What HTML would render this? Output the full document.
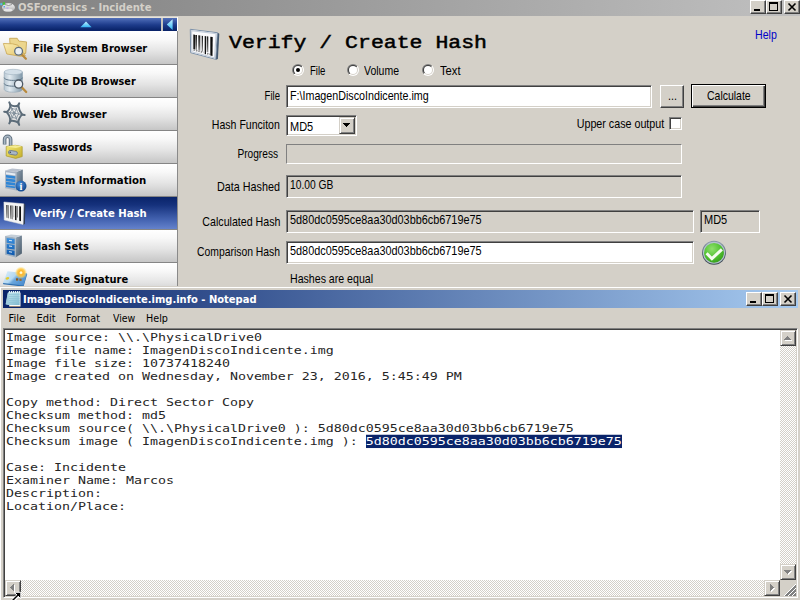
<!DOCTYPE html>
<html><head><meta charset="utf-8">
<style>
*{box-sizing:border-box;margin:0;padding:0}
html,body{width:800px;height:600px;overflow:hidden;background:#d4d0c8;font-family:"Liberation Sans",sans-serif;font-size:13px;color:#000}
.abs,.a{position:absolute}
/* scaled MS Sans Serif-like text */
.s{position:absolute;white-space:nowrap;font-size:13px;line-height:14px;transform-origin:0 0;transform:scaleX(var(--k,.82))}
.s.r{transform-origin:100% 0}
#title1{left:0;top:0;width:800px;height:16px;background:linear-gradient(90deg,#808080,#c0c0c0)}
.tt{position:absolute;font-family:"DejaVu Sans Condensed","DejaVu Sans",sans-serif;font-weight:bold;font-size:11px;line-height:13px;white-space:nowrap}
.wbtn{position:absolute;width:16px;height:14px;background:#d4d0c8;border:1px solid;border-color:#fff #404040 #404040 #fff;box-shadow:inset -1px -1px 0 #808080}
.wbtn svg{position:absolute;left:0;top:0}
#side{left:0;top:17px;width:178px;height:269px;background:#fff;overflow:hidden}
#strip{position:absolute;left:0;top:0;width:177px;height:14px;background:linear-gradient(180deg,#e6e3da 0,#e6e3da 1px,#5470b8 1px,#3a59a6 4px,#1d3b8a 8px,#0a246a 13px,#0a246a 100%)}
.item{position:absolute;left:0;width:178px;height:33px;border-bottom:1px solid #858585;background:linear-gradient(180deg,#ffffff 0%,#f8f8f8 25%,#e4e4e4 60%,#c6c6c6 100%)}
.item .tt{left:33px;top:10px;color:#000}
.item.sel{background:linear-gradient(180deg,#0a246a 0%,#15317c 25%,#4362b0 70%,#6482cc 100%)}
.item.sel .tt{color:#fff}
.item svg{position:absolute;left:0;top:0}
.field{position:absolute;border:1px solid;border-color:#808080 #fff #fff #808080;box-shadow:inset 1px 1px 0 #404040,inset -1px -1px 0 #d4d0c8;background:#fff}
.field.ro{background:#d4d0c8}
.btn{position:absolute;background:#d4d0c8;border:1px solid;border-color:#fff #404040 #404040 #fff;box-shadow:inset -1px -1px 0 #808080}
.radio{position:absolute;width:12px;height:12px}
#title2{left:3px;top:290px;width:795px;height:18px;background:linear-gradient(90deg,#0a246a,#a6caf0)}
#edit{left:3px;top:328px;width:795px;height:270px;background:#fff;border:1px solid;border-color:#808080 #fff #fff #808080;box-shadow:inset 1px 1px 0 #404040,inset -1px -1px 0 #d4d0c8}
pre{position:absolute;left:2px;top:2px;font-family:"DejaVu Sans Mono","Liberation Mono",monospace;font-size:13.29px;line-height:15.663px;color:#262626;transform-origin:0 0;transform:scaleY(.83)}
.hl{background:#0a246a;color:#fff;padding-bottom:1.2px}
.sb{position:absolute;background-color:#fff;background-image:conic-gradient(#d4d0c8 25%,#fff 0 50%,#d4d0c8 0 75%,#fff 0);background-size:2px 2px}
.sbtn{position:absolute;width:16px;height:16px;background:#d4d0c8;border:1px solid;border-color:#d4d0c8 #404040 #404040 #d4d0c8;box-shadow:inset 1px 1px 0 #fff,inset -1px -1px 0 #808080}
.sbtn svg{position:absolute;left:-1px;top:-1px}
</style></head><body>
<!-- ============ OSForensics window ============ -->
<div id="title1" class="abs"><svg class="a" style="left:0;top:0" width="17" height="16"><defs><linearGradient id="os1" x1="0" y1="0" x2="0" y2="1"><stop offset="0" stop-color="#fafafa"/><stop offset="1" stop-color="#a8a8a8"/></linearGradient></defs>
<ellipse cx="8.500" cy="7.500" rx="6.500" ry="4.300" fill="url(#os1)"/><ellipse cx="8" cy="10" rx="4.500" ry="1.600" fill="#e6e6e6"/><path d="M5 4.500q3.500 2 7 0" stroke="#8a8a8a" stroke-width=".9" fill="none"/>
<rect x="2.800" y="2.200" width="2.200" height="2.500" fill="#45c23a"/><rect x="0.300" y="3.200" width="2" height="2" fill="#52c6ee"/><rect x="3.500" y="6" width="1.500" height="1.500" fill="#5aa0ee"/><rect x="6.500" y="7.500" width="2" height="1.200" fill="#b59cf0"/></svg><span class="tt" style="left:18.200px;top:1px;color:#d4d0c8;transform-origin:0 0;transform:scaleX(1.014)">OSForensics - Incidente</span></div>
<div class="wbtn" style="left:750px;top:0"><svg width="16" height="14"><rect x="3" y="8" width="6" height="2" fill="#000"/></svg></div>
<div class="wbtn" style="left:766px;top:0"><svg width="16" height="14"><rect x="2.5" y="1.5" width="8" height="8" fill="none" stroke="#000"/><rect x="2" y="1" width="9" height="2" fill="#000"/></svg></div>
<div class="wbtn" style="left:784px;top:0"><svg width="16" height="14"><path d="M3.5 2.5l7 7M10.5 2.5l-7 7" stroke="#000" stroke-width="1.6" fill="none"/></svg></div>

<div id="side" class="abs">
 <div id="strip"></div>
 <div class="a" style="left:161px;top:1px;width:2px;height:13px;background:#c9c5bd"></div>
 <svg class="a" style="left:0;top:0" width="178" height="14"><defs><linearGradient id="ar1" x1="0" y1="0" x2="0" y2="1"><stop offset="0" stop-color="#c8f4ff"/><stop offset="1" stop-color="#2fb4f4"/></linearGradient></defs><path d="M86 4.500l5.600 5.700h-11.200z" fill="url(#ar1)"/><path d="M166.800 7.500l5.800-5.300v10.800z" fill="url(#ar1)"/></svg>
 <div class="item" style="top:15px"><svg width="32" height="33"><defs><linearGradient id="fo1" x1="0" y1="0" x2="1" y2="1"><stop offset="0" stop-color="#fbeeb4"/><stop offset="1" stop-color="#e2c268"/></linearGradient></defs>
<path d="M9.6 6.3h7.6l1.6 2.8 7.8.8-.9 11.5-15 .8z" fill="#ecd68e" stroke="#c4a24e" stroke-width=".8"/>
<path d="M3.4 11.5l9 .3 5.4 1.3 7.6 10.6-5 .6-13.6-2.3z" fill="url(#fo1)" stroke="#c9a652" stroke-width=".8"/>
<path d="M21.3 22l4.6 4.8" stroke="#b98a3c" stroke-width="2.2" stroke-linecap="round"/>
<circle cx="18.6" cy="19.3" r="3.9" fill="#e9eff5" stroke="#5f6e7c" stroke-width="1.3"/></svg><span class="tt">File System Browser</span></div>
 <div class="item" style="top:48px"><svg width="32" height="33"><defs><linearGradient id="db1" x1="0" y1="0" x2="1" y2="0"><stop offset="0" stop-color="#b9c8d3"/><stop offset=".3" stop-color="#e2ebf1"/><stop offset="1" stop-color="#7f97a8"/></linearGradient></defs>
<path d="M4.2 7v17.2c0 1.8 4.1 3 9.1 3s9.2-1.200 9.200-3V7z" fill="url(#db1)" stroke="#8fa3b2" stroke-width=".6"/>
<path d="M4.2 12.600c0 1.700 4.100 2.800 9.100 2.800s9.200-1.100 9.200-2.800M4.200 18.400c0 1.700 4.100 2.800 9.100 2.800s9.200-1.100 9.200-2.800" fill="none" stroke="#62788a" stroke-width="1"/>
<ellipse cx="13.300" cy="7" rx="9.100" ry="2.700" fill="#d3dfe8" stroke="#9db0be" stroke-width=".6"/>
<path d="M21.500 22l4.700 5" stroke="#b98a3c" stroke-width="2.300" stroke-linecap="round"/>
<circle cx="18.600" cy="19.100" r="4.100" fill="#e9eff5" stroke="#4e5a66" stroke-width="1.300"/></svg><span class="tt" style="transform-origin:0 0;transform:scaleX(.976)">SQLite DB Browser</span></div>
 <div class="item" style="top:81px"><svg width="32" height="33"><g fill="none" stroke="#5c6c79" stroke-linecap="round">
<path d="M9.300 4.400L19.200 26.900M19.200 5.300L9.300 25.400M4.200 13.700L24.600 17" stroke="#8a97a2" stroke-width="1"/>
<path d="M9.300 4.400l1.200 2.700M19.200 5.300l-1.200 2.400M24.600 17l-2.600-.4M19.200 26.900l-1.200-2.800M9.300 25.400l1.200-2.500M4.200 13.700l2.600.4" stroke-width="2"/>
<path d="M10.300 6.800Q14.500 9.400 18.400 7.400Q18.800 12.500 22.200 16.600Q18.600 19.800 18.400 24.600Q14 22.200 10.100 23Q10.500 18.200 6.600 14.100Q10.500 11.400 10.300 6.800z" stroke-width="1.900"/>
<path d="M12 10.500Q14.300 11.700 16.600 10.800Q17 13.600 19 15.900Q16.900 17.700 16.500 20.500Q14.100 19.400 11.900 19.700Q12 17 9.800 14.600Q12 13 12 10.500z" stroke="#7c8a96" stroke-width=".9"/>
<circle cx="14.100" cy="15.200" r="1.300" stroke="#7c8a96" stroke-width=".9"/></g></svg><span class="tt">Web Browser</span></div>
 <div class="item" style="top:114px"><svg width="32" height="33"><defs><linearGradient id="lk1" x1="0" y1="0" x2="1" y2="1"><stop offset="0" stop-color="#f3e873"/><stop offset="1" stop-color="#c4ae2c"/></linearGradient></defs>
<path d="M4.600 13.500V8.300a3 3 0 0 1 6 0V15" fill="none" stroke="#5d6d7c" stroke-width="3.600"/>
<path d="M4.600 13.500V8.300a3 3 0 0 1 6 0V15" fill="none" stroke="#a7b6c3" stroke-width="1.700"/>
<path d="M6.200 15.500l9-1.200 7 1.300v10l-6.500 1.800-9.500-2.400z" fill="url(#lk1)" stroke="#a8962a" stroke-width=".7"/>
<path d="M6.200 15.500l9-1.200 7 1.300-6.500 1.300z" fill="#f5ec94"/>
<rect x="8.400" y="19.900" width="9" height="3.800" rx="1.900" transform="rotate(10 13 22)" fill="#a9b7c6" stroke="#667689" stroke-width=".8"/><circle cx="10.300" cy="21.300" r=".8" fill="#3c4650"/></svg><span class="tt">Passwords</span></div>
 <div class="item" style="top:147px"><svg width="32" height="33"><defs><radialGradient id="sv1" cx=".4" cy=".35" r=".7"><stop offset="0" stop-color="#4a90dc"/><stop offset="1" stop-color="#0d4388"/></radialGradient></defs>
<path d="M16.200 8l6.600-2.400v17.600l-6.600 3.400z" fill="url(#cb2)"/>
<path d="M5.100 6.500l7-2 10.700 1.100-6.600 2.400z" fill="#b8c0cd"/>
<path d="M5.100 6.500l11.100 1.500v18.600L5.100 24.200z" fill="#a9b4c4"/>
<path d="M6 8.200l9.300 1.200v2L6 10.300z" fill="#e8edf3"/>
<path d="M6 11l9.300 1.200v2.600L6 13.600zM6 14.400l9.300 1.200v2.600L6 17zM6 17.800l9.300 1.200v2.600L6 20.400zM6 21.200l9.300 1.200v1.800L6 22.900z" fill="#2f86d6"/>
<circle cx="21" cy="22.100" r="5.500" fill="url(#sv1)"/>
<text x="21" y="26" text-anchor="middle" font-family="Liberation Serif,serif" font-weight="bold" font-size="10.500" fill="#fff">i</text></svg><span class="tt" style="transform-origin:0 0;transform:scaleX(1.026)">System Information</span></div>
 <div class="item sel" style="top:180px"><svg width="32" height="33"><path d="M23.700 6.600l1.700 1-.5 19.500-1.800.600z" fill="#2f3b50"/>
<path d="M3.900 5l19.800 1.800-.6 20.700L4.200 23z" fill="#f4f4f4" stroke="#dcdcdc" stroke-width=".5"/>
<g fill="#555"><path d="M6.300 8l1.200.1v13l-1.200-.3z" fill="url(#bb1)"/><path d="M7.800 8.100l1.200.1v13.200l-1.200-.3z" fill="#8c8c8c"/><path d="M10.200 8.400l1.300.1v13.600l-1.300-.3z" fill="url(#bb1)"/><path d="M11.700 8.500l1.200.1v13.800l-1.200-.3z" fill="#8c8c8c"/><path d="M13.400 8.700h.8v11.500h-.8z" fill="#aaa"/><path d="M15 8.800l1.500.1v14.400l-1.500-.3z" fill="#1c1c1c"/><path d="M16.900 9l1.100.1v11.500h-1.100z" fill="#888"/><path d="M19.200 9.200l1.800.2v14.800l-1.800-.4z" fill="#111"/></g></svg><span class="tt" style="transform-origin:0 0;transform:scaleX(1.018)">Verify / Create Hash</span></div>
 <div class="item" style="top:213px"><svg width="32" height="33"><defs><linearGradient id="cb1" x1="0" y1="0" x2="0" y2="1"><stop offset="0" stop-color="#3a90e0"/><stop offset="1" stop-color="#0f58ac"/></linearGradient><linearGradient id="cb2" x1="0" y1="0" x2="1" y2="1"><stop offset="0" stop-color="#93a4b4"/><stop offset="1" stop-color="#465868"/></linearGradient></defs>
<path d="M15.600 7.500l6.300-2v18l-6.300 4z" fill="url(#cb2)"/>
<path d="M5.100 6l6-1.600 10.800 1.100-6.300 2z" fill="#c4ced8"/>
<path d="M5.100 6l10.500 1.500v20L5.100 24.800z" fill="#9fb0c0"/>
<path d="M6.700 8l7.900 1.100v4.800L6.700 12.700zM6.700 13.900l7.900 1.200v4.500l-7.900-1.200zM6.700 19.500l7.900 1.200v4.700l-7.900-1.600z" fill="url(#cb1)"/>
<path d="M9 10.400l3 .4M9 16l3 .4M9 21.700l3 .5" stroke="#dbe9f6" stroke-width="1"/></svg><span class="tt">Hash Sets</span></div>
 <div class="item" style="top:246px"><svg width="32" height="33"><defs><linearGradient id="sg1" x1="0" y1="0" x2="1" y2=".6"><stop offset="0" stop-color="#dceef9"/><stop offset=".5" stop-color="#b4d8f2"/><stop offset=".62" stop-color="#6aa6dc"/><stop offset="1" stop-color="#4d8fd0"/></linearGradient><radialGradient id="sg2"><stop offset="0" stop-color="#fff"/><stop offset=".14" stop-color="#fff6c0"/><stop offset=".32" stop-color="#ffb52a"/><stop offset=".62" stop-color="#ffc640" stop-opacity=".85"/><stop offset="1" stop-color="#ffe470" stop-opacity="0"/></radialGradient></defs>
<path d="M3 20l.3 1.200 20.200 2.500 3.600-12.300-.1-.9z" fill="#2e6eae"/>
<path d="M7.500 8.200L27 10.500l-3.500 12L3 20z" fill="url(#sg1)"/>
<ellipse cx="7.400" cy="15.400" rx="1.900" ry="1.300" transform="rotate(-20 7.400 15.400)" fill="#e3cb2c"/>
<rect x="16" y="15.300" width="2.200" height="2.300" fill="#8a5a20"/><rect x="19.400" y="15.600" width="2.200" height="2.300" fill="#9a6a30"/>
<circle cx="21" cy="9.700" r="6.200" fill="url(#sg2)"/></svg><span class="tt">Create Signature</span></div>
 <div class="a" style="left:177px;top:14px;width:1px;height:256px;background:#8a8a8a"></div>
</div>

<div class="abs" style="left:229px;top:32px;font-family:'Liberation Mono',monospace;font-weight:normal;-webkit-text-stroke:.5px #000;font-size:18.5px;line-height:24px;white-space:nowrap;transform-origin:0 0;transform:scaleX(1.162)">Verify / Create Hash</div>
<span class="s" style="left:754.6px;top:28px;color:#0000c8;--k:.815">Help</span>

<svg class="a" style="left:292px;top:64px" width="12" height="12"><defs><linearGradient id="rg0a" x1="0" y1="0" x2="1" y2="1"><stop offset=".5" stop-color="#808080"/><stop offset=".5" stop-color="#fff"/></linearGradient><linearGradient id="rg0b" x1="0" y1="0" x2="1" y2="1"><stop offset=".5" stop-color="#404040"/><stop offset=".5" stop-color="#d4d0c8"/></linearGradient></defs><circle cx="6" cy="6" r="6" fill="url(#rg0a)"/><circle cx="6" cy="6" r="5" fill="url(#rg0b)"/><circle cx="6" cy="6" r="4" fill="#fff"/><circle cx="6" cy="6" r="2" fill="#000"/></svg>
<svg class="a" style="left:347px;top:64px" width="12" height="12"><defs><linearGradient id="rg1a" x1="0" y1="0" x2="1" y2="1"><stop offset=".5" stop-color="#808080"/><stop offset=".5" stop-color="#fff"/></linearGradient><linearGradient id="rg1b" x1="0" y1="0" x2="1" y2="1"><stop offset=".5" stop-color="#404040"/><stop offset=".5" stop-color="#d4d0c8"/></linearGradient></defs><circle cx="6" cy="6" r="6" fill="url(#rg1a)"/><circle cx="6" cy="6" r="5" fill="url(#rg1b)"/><circle cx="6" cy="6" r="4" fill="#fff"/></svg>
<svg class="a" style="left:422px;top:64px" width="12" height="12"><defs><linearGradient id="rg2a" x1="0" y1="0" x2="1" y2="1"><stop offset=".5" stop-color="#808080"/><stop offset=".5" stop-color="#fff"/></linearGradient><linearGradient id="rg2b" x1="0" y1="0" x2="1" y2="1"><stop offset=".5" stop-color="#404040"/><stop offset=".5" stop-color="#d4d0c8"/></linearGradient></defs><circle cx="6" cy="6" r="6" fill="url(#rg2a)"/><circle cx="6" cy="6" r="5" fill="url(#rg2b)"/><circle cx="6" cy="6" r="4" fill="#fff"/></svg>
<svg class="a" style="left:186px;top:26px" width="36" height="36"><defs><linearGradient id="bb1" x1="0" y1="0" x2="0" y2="1"><stop offset="0" stop-color="#1a1a1a"/><stop offset=".65" stop-color="#5a5a5a"/><stop offset="1" stop-color="#9a9a9a"/></linearGradient><linearGradient id="bb2" x1="0" y1="0" x2="0" y2="1"><stop offset="0" stop-color="#111"/><stop offset="1" stop-color="#222"/></linearGradient></defs>
<path d="M31.300 6.500l2 1.200-1.400 25.300-2.200.7z" fill="#44586f"/>
<path d="M4.300 3.300l27 3.400-1.600 26.600-25-6.600z" fill="#fbfbfd" stroke="#7b90a8" stroke-width="1"/>
<path d="M5.500 4.600l24.600 3.100-1.500 24.200-22.700-6z" fill="none" stroke="#c6cfdb" stroke-width="1.200"/>
<path d="M7.300 8.600l1.700.2v14.600l-1.700-.4z" fill="url(#bb2)"/><path d="M9.300 8.900l1.700.2v14.800l-1.700-.4z" fill="url(#bb1)"/>
<path d="M12.300 9.300l2 .2v15.200l-2-.5z" fill="url(#bb1)"/><path d="M15.700 9.700l1.300.2v15.600l-1.300-.3z" fill="url(#bb1)"/>
<path d="M18.700 10.100l1.300.2v18l-1.300-.3z" fill="#111"/><path d="M20.700 10.300l1.600.2v15.800l-1.600-.4z" fill="url(#bb1)"/>
<path d="M24.300 10.800l2.400.3-.2 18.900-2.200-.6z" fill="#0c0c0c"/>
<path d="M7.500 23.800l10 2.600M21 27.600l3 .8" stroke="#8a8a8a" stroke-width="1.800" stroke-dasharray="1.500 1"/></svg>
<svg class="a" style="left:701px;top:240px" width="26" height="26"><defs><radialGradient id="ck1" cx=".4" cy=".3" r=".8"><stop offset="0" stop-color="#8fe06c"/><stop offset=".55" stop-color="#52c232"/><stop offset="1" stop-color="#2f9616"/></radialGradient><linearGradient id="ck2" x1="0" y1="0" x2="0" y2="1"><stop offset="0" stop-color="#8a99a8"/><stop offset="1" stop-color="#3f4953"/></linearGradient></defs>
<circle cx="13" cy="12.800" r="12" fill="url(#ck2)"/><circle cx="13" cy="12.800" r="11" fill="#b4c2cf"/><circle cx="13" cy="12.800" r="9.900" fill="url(#ck1)"/>
<path d="M5.600 13.300l5.300 5.400 10-9.400" fill="none" stroke="#f4fbef" stroke-width="3"/></svg>
<span class="s" style="left:309.8px;top:64px;--k:.735">File</span>
<span class="s" style="left:364.3px;top:64px;--k:.807">Volume</span>
<span class="s" style="left:440px;top:64px;--k:.86">Text</span>

<span class="s r" style="right:520px;top:89px;--k:.735">File</span>
<div class="field" style="left:286px;top:85px;width:366px;height:23px"><span class="s" style="left:2.6px;top:3px;--k:.824">F:\ImagenDiscoIndicente.img</span></div>
<div class="btn" style="left:660px;top:85px;width:24px;height:23px"><span class="s" style="left:7px;top:3px;--k:.82">...</span></div>
<div class="btn" style="left:691px;top:84px;width:75px;height:24px;border:1px solid #000;box-shadow:inset 1px 1px 0 #fff,inset -1px -1px 0 #404040,inset -2px -2px 0 #808080"><span class="s" style="left:14.6px;top:4px;--k:.806">Calculate</span></div>

<span class="s r" style="right:520px;top:118px;--k:.811">Hash Funciton</span>
<div class="field" style="left:286px;top:115px;width:71px;height:21px"><span class="s" style="left:3.4px;top:4px;--k:.845">MD5</span>
 <div class="sbtn" style="left:52px;top:1px;height:17px"><svg width="16" height="17" shape-rendering="crispEdges"><rect x="4" y="6" width="7" height="1" fill="#000"/><rect x="5" y="7" width="5" height="1" fill="#000"/><rect x="6" y="8" width="3" height="1" fill="#000"/><rect x="7" y="9" width="1" height="1" fill="#000"/></svg></div></div>
<span class="s r" style="right:135.5px;top:117px;--k:.824">Upper case output</span>
<div class="field" style="left:669px;top:117px;width:13px;height:13px"></div>

<span class="s r" style="right:521.9px;top:147px;--k:.78">Progress</span>
<div class="field ro" style="left:286px;top:144px;width:396px;height:20px;box-shadow:none"></div>

<span class="s r" style="right:520.6px;top:180px;--k:.829">Data Hashed</span>
<div class="field ro" style="left:286px;top:175px;width:396px;height:23px"><span class="s" style="left:2.6px;top:2px;--k:.79">10.00 GB</span></div>

<span class="s r" style="right:519.6px;top:215px;--k:.818">Calculated Hash</span>
<div class="field ro" style="left:286px;top:210px;width:408px;height:23px"><span class="s" style="left:2.6px;top:2px;--k:.836">5d80dc0595ce8aa30d03bb6cb6719e75</span></div>
<div class="field ro" style="left:700px;top:210px;width:60px;height:23px"><span class="s" style="left:3.2px;top:2px;--k:.845">MD5</span></div>

<span class="s r" style="right:519.6px;top:245px;--k:.797">Comparison Hash</span>
<div class="field" style="left:286px;top:241px;width:408px;height:23px"><span class="s" style="left:2.6px;top:2px;--k:.836">5d80dc0595ce8aa30d03bb6cb6719e75</span></div>
<span class="s" style="left:289.6px;top:272px;--k:.815">Hashes are equal</span>

<!-- ============ Notepad ============ -->
<div class="abs" style="left:0;top:286px;width:800px;height:314px;background:#d4d0c8"></div>
<div class="abs" style="left:0;top:287px;width:800px;height:1px;background:#fff"></div>
<div class="abs" style="left:0;top:287px;width:1px;height:313px;background:#fff"></div>
<div id="title2" class="abs"><svg class="a" style="left:0;top:0" width="20" height="18"><defs><linearGradient id="np1" x1="0" y1="0" x2="1" y2="1"><stop offset="0" stop-color="#c9eaf3"/><stop offset="1" stop-color="#7fb9cf"/></linearGradient></defs>
<path d="M6.200 2.600h11.300v13.600H6.200z" fill="#fff"/><path d="M6.200 16.400h11.300" stroke="#c9a56a" stroke-width=".7"/>
<path d="M5.200 2.300h11.500v12.600H6L2.700 14.300z" fill="url(#np1)"/>
<path d="M2.700 14.300L4.600 3l.8-.7.600 12.600z" fill="#9fcadb"/>
<path d="M6 4.500h10.500M6 6.500h10.500M6 8.500h10.500M6 10.500h10.500M6 12.500h10.500" stroke="#8ec3d6" stroke-width=".7"/>
<path d="M6.500 1v2M8.500 1v2M10.500 1v2M12.500 1v2M14.500 1v2M16.300 1v2" stroke="#dff1f7" stroke-width="1.200"/></svg><span class="tt" style="left:20px;top:3px;color:#fff;transform-origin:0 0;transform:scaleX(1.006)">ImagenDiscoIndicente.img.info - Notepad</span></div>
<div class="wbtn" style="left:746px;top:292px"><svg width="16" height="14"><rect x="3" y="8" width="6" height="2" fill="#000"/></svg></div>
<div class="wbtn" style="left:762px;top:292px"><svg width="16" height="14"><rect x="2.5" y="1.5" width="8" height="8" fill="none" stroke="#000"/><rect x="2" y="1" width="9" height="2" fill="#000"/></svg></div>
<div class="wbtn" style="left:780px;top:292px"><svg width="16" height="14"><path d="M3.5 2.5l7 7M10.5 2.5l-7 7" stroke="#000" stroke-width="1.6" fill="none"/></svg></div>
<div class="abs" style="left:0;top:308px;width:800px;height:20px;font-family:'DejaVu Sans Condensed','DejaVu Sans',sans-serif;font-size:11px;line-height:13px">
 <span class="a" style="left:8.5px;top:4px">File</span><span class="a" style="left:36.5px;top:4px">Edit</span><span class="a" style="left:66.4px;top:4px;transform-origin:0 0;transform:scaleX(.975)">Format</span><span class="a" style="left:113px;top:4px;transform-origin:0 0;transform:scaleX(.95)">View</span><span class="a" style="left:146px;top:4px;transform-origin:0 0;transform:scaleX(.97)">Help</span></div>
<div id="edit" class="abs">
<pre>Image source: \\.\PhysicalDrive0
Image file name: ImagenDiscoIndicente.img
Image file size: 10737418240
Image created on Wednesday, November 23, 2016, 5:45:49 PM

Copy method: Direct Sector Copy
Checksum method: md5
Checksum source( \\.\PhysicalDrive0 ): 5d80dc0595ce8aa30d03bb6cb6719e75
Checksum image ( ImagenDiscoIndicente.img ): <span class="hl">5d80dc0595ce8aa30d03bb6cb6719e75</span>

Case: Incidente
Examiner Name: Marcos
Description:
Location/Place:</pre>
</div>
<!-- scrollbars -->
<div class="sb" style="left:780px;top:330px;width:16px;height:250px"></div>
<div class="sb" style="left:5px;top:580px;width:775px;height:16px"></div>
<div class="abs" style="left:780px;top:580px;width:16px;height:16px;background:#d4d0c8"></div>
<svg class="a" style="left:780px;top:580px" width="16" height="16" shape-rendering="crispEdges"><g stroke-width="1.100"><path d="M4.500 16L16 4.500M8.500 16L16 8.500M12.500 16L16 12.500" stroke="#fff"/><path d="M5.500 16L16 5.500M6.500 16L16 6.500M9.500 16L16 9.500M10.500 16L16 10.500M13.500 16L16 13.500M14.500 16L16 14.500" stroke="#808080"/></g></svg>
<div class="sbtn" style="left:780px;top:330px"><svg width="16" height="16" shape-rendering="crispEdges"><rect x="8" y="7" width="1" height="1" fill="#fff"/><rect x="7" y="8" width="3" height="1" fill="#fff"/><rect x="6" y="9" width="5" height="1" fill="#fff"/><rect x="5" y="10" width="7" height="1" fill="#fff"/><rect x="7" y="6" width="1" height="1" fill="#808080"/><rect x="6" y="7" width="3" height="1" fill="#808080"/><rect x="5" y="8" width="5" height="1" fill="#808080"/><rect x="4" y="9" width="7" height="1" fill="#808080"/></svg></div>
<div class="sbtn" style="left:780px;top:564px"><svg width="16" height="16" shape-rendering="crispEdges"><rect x="5" y="7" width="7" height="1" fill="#fff"/><rect x="6" y="8" width="5" height="1" fill="#fff"/><rect x="7" y="9" width="3" height="1" fill="#fff"/><rect x="8" y="10" width="1" height="1" fill="#fff"/><rect x="4" y="6" width="7" height="1" fill="#808080"/><rect x="5" y="7" width="5" height="1" fill="#808080"/><rect x="6" y="8" width="3" height="1" fill="#808080"/><rect x="7" y="9" width="1" height="1" fill="#808080"/></svg></div>
<div class="sbtn" style="left:5px;top:580px"><svg width="16" height="16" shape-rendering="crispEdges"><rect x="6" y="8" width="1" height="1" fill="#fff"/><rect x="7" y="7" width="1" height="3" fill="#fff"/><rect x="8" y="6" width="1" height="5" fill="#fff"/><rect x="9" y="5" width="1" height="7" fill="#fff"/><rect x="5" y="7" width="1" height="1" fill="#808080"/><rect x="6" y="6" width="1" height="3" fill="#808080"/><rect x="7" y="5" width="1" height="5" fill="#808080"/><rect x="8" y="4" width="1" height="7" fill="#808080"/></svg></div>
<div class="sbtn" style="left:764px;top:580px"><svg width="16" height="16" shape-rendering="crispEdges"><rect x="7" y="5" width="1" height="7" fill="#fff"/><rect x="8" y="6" width="1" height="5" fill="#fff"/><rect x="9" y="7" width="1" height="3" fill="#fff"/><rect x="10" y="8" width="1" height="1" fill="#fff"/><rect x="6" y="4" width="1" height="7" fill="#808080"/><rect x="7" y="5" width="1" height="5" fill="#808080"/><rect x="8" y="6" width="1" height="3" fill="#808080"/><rect x="9" y="7" width="1" height="1" fill="#808080"/></svg></div>
<svg class="a" style="left:4px;top:584px" width="20" height="16"><path d="M15.500 10L8.500 17" stroke="#fff" stroke-width="3.400"/><path d="M10.300 8.300h6.500v6.500z" fill="#000" stroke="#fff" stroke-width="1"/><path d="M14.500 10.500L8.500 16.500" stroke="#000" stroke-width="1.500"/></svg>
</body></html>
